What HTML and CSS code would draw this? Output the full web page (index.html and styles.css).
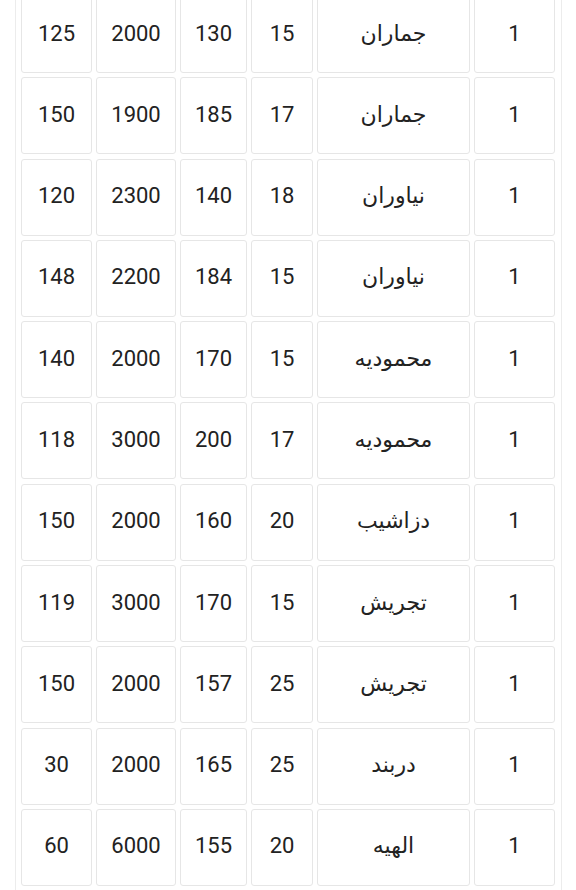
FILE: index.html
```html
<!DOCTYPE html>
<html lang="fa">
<head>
<meta charset="utf-8">
<title>جدول</title>
<link rel="stylesheet" href="styles.css">
</head>
<body>
<div class="table-wrap">
  <div class="grid" dir="rtl">
    <div class="cell">1</div><div class="cell">جماران</div><div class="cell">15</div><div class="cell">130</div><div class="cell">2000</div><div class="cell">125</div>
    <div class="cell">1</div><div class="cell">جماران</div><div class="cell">17</div><div class="cell">185</div><div class="cell">1900</div><div class="cell">150</div>
    <div class="cell">1</div><div class="cell">نیاوران</div><div class="cell">18</div><div class="cell">140</div><div class="cell">2300</div><div class="cell">120</div>
    <div class="cell">1</div><div class="cell">نیاوران</div><div class="cell">15</div><div class="cell">184</div><div class="cell">2200</div><div class="cell">148</div>
    <div class="cell">1</div><div class="cell">محمودیه</div><div class="cell">15</div><div class="cell">170</div><div class="cell">2000</div><div class="cell">140</div>
    <div class="cell">1</div><div class="cell">محمودیه</div><div class="cell">17</div><div class="cell">200</div><div class="cell">3000</div><div class="cell">118</div>
    <div class="cell">1</div><div class="cell">دزاشیب</div><div class="cell">20</div><div class="cell">160</div><div class="cell">2000</div><div class="cell">150</div>
    <div class="cell">1</div><div class="cell">تجریش</div><div class="cell">15</div><div class="cell">170</div><div class="cell">3000</div><div class="cell">119</div>
    <div class="cell">1</div><div class="cell">تجریش</div><div class="cell">25</div><div class="cell">157</div><div class="cell">2000</div><div class="cell">150</div>
    <div class="cell">1</div><div class="cell">دربند</div><div class="cell">25</div><div class="cell">165</div><div class="cell">2000</div><div class="cell">30</div>
    <div class="cell">1</div><div class="cell">الهیه</div><div class="cell">20</div><div class="cell">155</div><div class="cell">6000</div><div class="cell">60</div>
  </div>
</div>
</body>
</html>
```
FILE: styles.css
```css
html, body {
  margin: 0;
  padding: 0;
  background: #ffffff;
}
body {
  font-family: Roboto, "DejaVu Sans", sans-serif;
  color: #222222;
  overflow: hidden;
}
.table-wrap {
  box-sizing: border-box;
  margin: -10px 0 0 15px;
  width: 547px;
  border: 1px solid #ececec;
  padding: 5px 6px 5px 5px;
}
.grid {
  display: grid;
  grid-template-columns: 81px 153px 62px 67px 80px 71px;
  grid-auto-rows: 77px;
  column-gap: 4px;
  row-gap: 4.3px;
}
.cell {
  box-sizing: border-box;
  border: 1px solid #e6e6e6;
  border-radius: 3px;
  display: flex;
  align-items: center;
  justify-content: center;
  font-size: 22px;
  padding-bottom: 3px;
}
```
